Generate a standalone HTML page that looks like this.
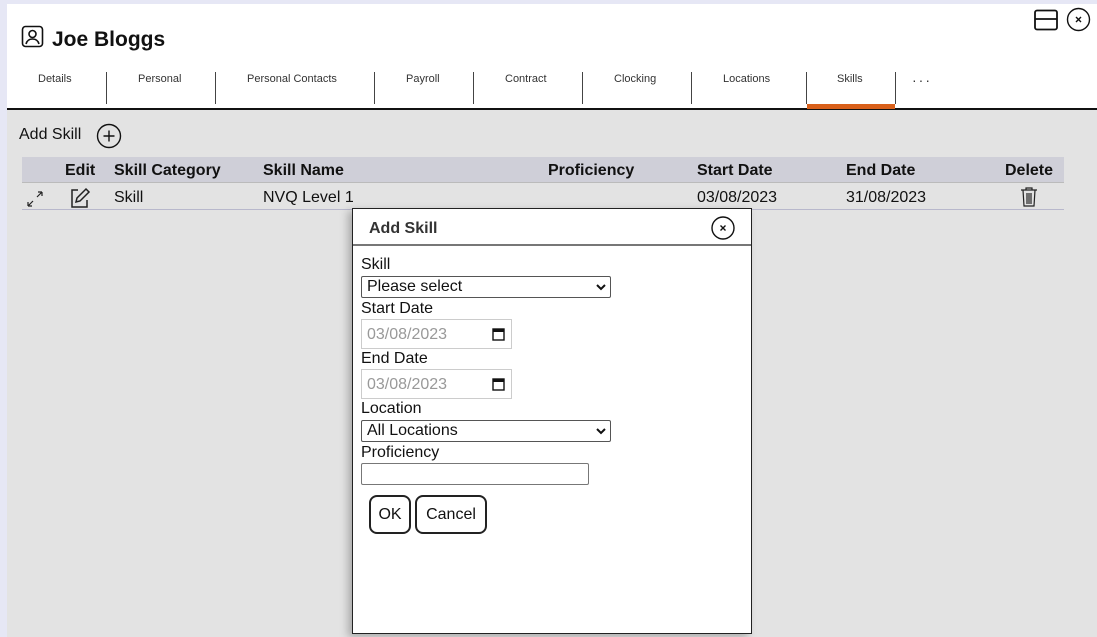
<!DOCTYPE html>
<html><head><style>
*{box-sizing:border-box;margin:0;padding:0}
body{width:1097px;height:637px;overflow:hidden;background:#e6e7f5;font-family:"Liberation Sans",sans-serif;color:#111;position:relative}
#main{position:absolute;left:7px;top:4px;right:0;bottom:0;background:#e3e3e3}
#top{position:absolute;left:7px;top:4px;width:1090px;height:106px;background:#fff;border-bottom:2px solid #111}
.t{position:absolute;top:69px;font-size:11px;color:#333;text-align:center}
.sep{position:absolute;top:68px;width:1px;height:32px;background:#444}
.abs{position:absolute}
.hdr{position:absolute;left:22px;top:157px;width:1042px;height:26px;background:#cfcfd8;border-bottom:1px solid #bbb}
.row{position:absolute;left:22px;top:183px;width:1042px;height:27px;border-bottom:1px solid #b8b8cc}
.h{position:absolute;top:162px;font-size:16px;font-weight:bold;color:#111}
.c{position:absolute;top:189px;font-size:16px;color:#111}
#modal{position:absolute;left:352px;top:208px;width:400px;height:426px;background:#fff;border:1px solid #222;box-shadow:-4px 3px 8px rgba(0,0,0,.25)}
.lbl{position:absolute;left:8px;font-size:16px;color:#111}
.sel{position:absolute;left:8px;width:250px;height:22px;border:1px solid #555;border-radius:2px;font-size:16px;padding-left:5px;line-height:20px}
.sel svg{position:absolute;right:4px;top:7px}
.date{position:absolute;left:8px;width:151px;height:30px;border:1px solid #ccc;font-size:16px;color:#999;padding:6px 5px}
.btn{position:absolute;top:286px;height:39px;border:2px solid #222;border-radius:8px;font-size:16px;text-align:center;line-height:35px}
</style></head><body>
<div id="main"></div>
<div id="top">
<svg class="abs" style="left:14px;top:21px" width="23" height="23" viewBox="0 0 23 23" fill="none" stroke="#111" stroke-width="1.6"><rect x="1.5" y="1.5" width="20" height="20" rx="3"/><circle cx="11.5" cy="9" r="3.5"/><path d="M5 19c1-4 4-5 6.5-5s5.5 1 6.5 5"/></svg>
<div class="abs" style="left:45px;top:24px;font-size:21px;font-weight:bold;color:#111">Joe Bloggs</div>
<svg class="abs" style="left:1027px;top:5px" width="24" height="22" viewBox="0 0 24 22" fill="none" stroke="#111" stroke-width="1.8"><rect x="1" y="1.5" width="22" height="19" rx="2"/><path d="M1 10h22"/></svg>
<svg class="abs" style="left:1059px;top:3px" width="25" height="25" viewBox="0 0 25 25" fill="none" stroke="#111" stroke-width="1.4"><circle cx="12.5" cy="12.5" r="11"/><path d="M10 10l5 5M15 10l-5 5"/></svg>
<div class="t" style="left:31px">Details</div>
<div class="sep" style="left:99px"></div>
<div class="t" style="left:131px">Personal</div>
<div class="sep" style="left:208px"></div>
<div class="t" style="left:240px">Personal Contacts</div>
<div class="sep" style="left:367px"></div>
<div class="t" style="left:399px">Payroll</div>
<div class="sep" style="left:466px"></div>
<div class="t" style="left:498px">Contract</div>
<div class="sep" style="left:575px"></div>
<div class="t" style="left:607px">Clocking</div>
<div class="sep" style="left:684px"></div>
<div class="t" style="left:716px">Locations</div>
<div class="sep" style="left:799px"></div>
<div class="t" style="left:830px">Skills</div>
<div class="sep" style="left:888px"></div>
<div class="abs" style="left:800px;top:100px;width:88px;height:5px;background:#d9601a"></div>
<div class="abs" style="left:905px;top:68px;font-size:14px;color:#333;letter-spacing:2px">···</div>
</div>
<div class="abs" style="left:19px;top:126px;font-size:16px">Add Skill</div>
<svg class="abs" style="left:96px;top:123px" width="26" height="26" viewBox="0 0 26 26" fill="none" stroke="#111" stroke-width="1.4"><circle cx="13" cy="13" r="11.5"/><path d="M13 7.5v11M7.5 13h11"/></svg>
<div class="hdr"></div><div class="row"></div>
<div class="h" style="left:65px">Edit</div>
<div class="h" style="left:114px">Skill Category</div>
<div class="h" style="left:263px">Skill Name</div>
<div class="h" style="left:548px">Proficiency</div>
<div class="h" style="left:697px">Start Date</div>
<div class="h" style="left:846px">End Date</div>
<div class="h" style="left:1005px">Delete</div>
<svg class="abs" style="left:26px;top:190px" width="18" height="18" viewBox="0 0 18 18" fill="none" stroke="#222" stroke-width="1.2"><path d="M2 16l5-5M2 16h4M2 16v-4M16 2l-5 5M16 2h-4M16 2v4"/></svg>
<svg class="abs" style="left:69px;top:187px" width="22" height="22" viewBox="0 0 22 22" fill="none" stroke="#222" stroke-width="1.5"><path d="M9 3H3v17h15v-7"/><path d="M17 2l3 3-9 9-4 1 1-4z"/></svg>
<div class="c" style="left:114px">Skill</div>
<div class="c" style="left:263px">NVQ Level 1</div>
<div class="c" style="left:697px">03/08/2023</div>
<div class="c" style="left:846px">31/08/2023</div>
<svg class="abs" style="left:1019px;top:186px" width="20" height="22" viewBox="0 0 20 22" fill="none" stroke="#222" stroke-width="1.2"><path d="M2 4h16M7 4V2h6v2M4 4l1 16h10l1-16M8 7v11M10 7v11M12 7v11"/></svg>
<div id="modal">
<div class="abs" style="left:0;top:0;width:398px;height:37px;border-bottom:2px solid #777"></div>
<div class="abs" style="left:16px;top:11px;font-size:16px;font-weight:bold;color:#333">Add Skill</div>
<svg class="abs" style="left:358px;top:7px" width="24" height="24" viewBox="0 0 24 24" fill="none" stroke="#111" stroke-width="1.4"><circle cx="12" cy="12" r="11"/><path d="M9.5 9.5l5 5M14.5 9.5l-5 5"/></svg>
<div class="lbl" style="top:47px">Skill</div>
<div class="sel" style="top:67px">Please select<svg width="10" height="7" viewBox="0 0 10 7"><path d="M1 1l4 4 4-4" fill="none" stroke="#111" stroke-width="2"/></svg></div>
<div class="lbl" style="top:91px">Start Date</div>
<div class="date" style="top:110px">03/08/2023<svg style="position:absolute;right:6px;top:7px" width="13" height="14" viewBox="0 0 13 14"><rect x="1" y="2" width="11" height="11" fill="none" stroke="#111" stroke-width="1.4"/><rect x="1" y="2" width="11" height="3" fill="#111"/></svg></div>
<div class="lbl" style="top:141px">End Date</div>
<div class="date" style="top:160px">03/08/2023<svg style="position:absolute;right:6px;top:7px" width="13" height="14" viewBox="0 0 13 14"><rect x="1" y="2" width="11" height="11" fill="none" stroke="#111" stroke-width="1.4"/><rect x="1" y="2" width="11" height="3" fill="#111"/></svg></div>
<div class="lbl" style="top:191px">Location</div>
<div class="sel" style="top:211px">All Locations<svg width="10" height="7" viewBox="0 0 10 7"><path d="M1 1l4 4 4-4" fill="none" stroke="#111" stroke-width="2"/></svg></div>
<div class="lbl" style="top:235px">Proficiency</div>
<div class="abs" style="left:8px;top:254px;width:228px;height:22px;border:1px solid #777;border-radius:2px"></div>
<div class="btn" style="left:16px;width:42px">OK</div>
<div class="btn" style="left:62px;width:72px">Cancel</div>
</div>
</body></html>
